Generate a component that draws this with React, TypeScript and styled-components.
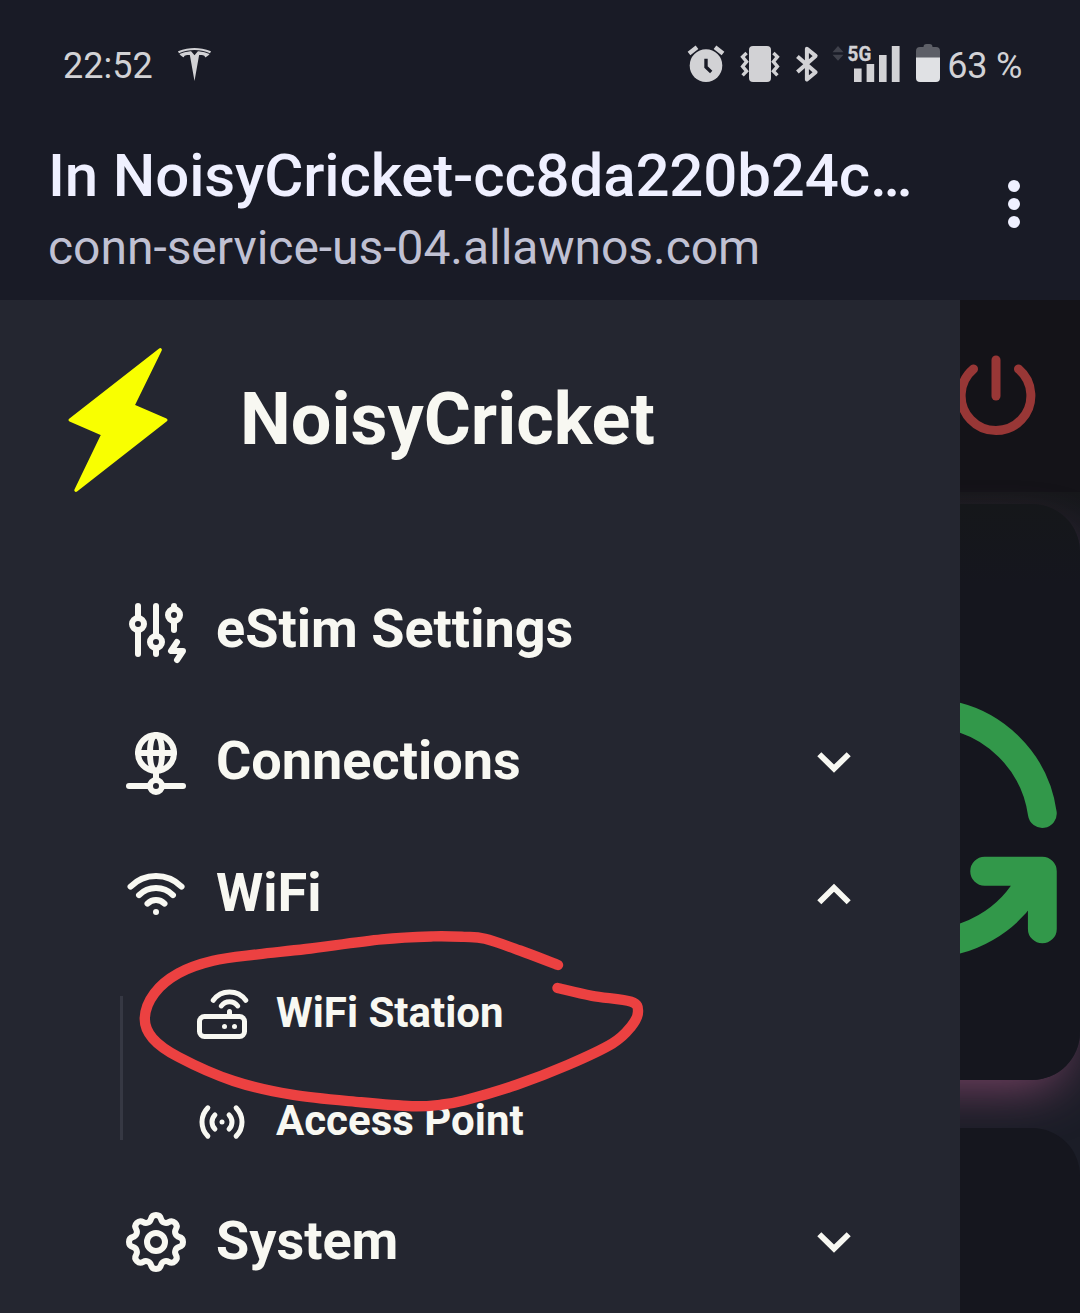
import React from "react";
import styled, { createGlobalStyle } from "styled-components";
import {
  TbAccessPoint,
  TbAdjustmentsBolt,
  TbNetwork,
  TbPower,
  TbRefresh,
  TbRouter,
  TbSettings,
  TbWifi,
} from "react-icons/tb";
import type { IconType } from "react-icons";

const GlobalStyle = createGlobalStyle`
  *, *::before, *::after { box-sizing: border-box; }
  body {
    margin: 0;
    background: #191b26;
    font-family: Roboto, "Liberation Sans", sans-serif;
  }
  svg { display: block; flex-shrink: 0; }
`;

const Screen = styled.div`
  position: relative;
  display: flex;
  flex-direction: column;
  width: 1080px;
  height: 1313px;
  overflow: hidden;
  background: #191b26;
`;

const StatusBar = styled.header`
  display: flex;
  justify-content: space-between;
  align-items: center;
  height: 120px;
  padding: 12px 58px 0 63px;
  color: #d2d2d5;
  font-size: 36px;
  line-height: 42px;
`;

const StatusGroup = styled.div<{ $gap: number; $tracking?: number }>`
  display: flex;
  align-items: center;
  gap: ${(p) => p.$gap}px;
  height: 42px;
  letter-spacing: ${(p) => p.$tracking ?? 0}px;

  svg { margin-bottom: 4px; letter-spacing: 0; }
`;

const TitleBar = styled.div`
  display: flex;
  justify-content: space-between;
  height: 180px;
  padding: 21px 60px 0 48px;
`;

const Titles = styled.div`
  display: flex;
  flex-direction: column;
  white-space: nowrap;
`;

const PageTitle = styled.h1`
  margin: 0;
  color: #eff0ff;
  font-size: 60px;
  font-weight: 500;
  line-height: 70px;
  letter-spacing: -0.15px;
`;

const PageHost = styled.div`
  margin-top: 9px;
  color: #c0c1d3;
  font-size: 48px;
  line-height: 56px;
  letter-spacing: -0.03px;
`;

const MenuDots = styled.button`
  display: flex;
  flex-direction: column;
  gap: 6px;
  margin: 39px 0 0;
  padding: 0;
  border: 0;
  background: none;
`;

const Dot = styled.span`
  width: 12px;
  height: 12px;
  border-radius: 50%;
  background: #eff0ff;
`;

const Body = styled.div`
  display: grid;
  grid-template-columns: 960px 120px;
  height: 1013px;
`;

const Drawer = styled.nav`
  background: #242630;
  color: #f8f8f2;
  overflow: hidden;
`;

const Brand = styled.div`
  display: flex;
  align-items: center;
  gap: 68px;
  height: 264px;
  padding: 0 0 24px 64px;
`;

const BrandName = styled.span`
  font-size: 72px;
  font-weight: 700;
  line-height: 84px;
`;

const Item = styled.div`
  display: flex;
  align-items: center;
  height: 132px;
  padding: 0 105px 0 120px;
  gap: 24px;
`;

const ItemLabel = styled.span`
  flex: 1;
  font-size: 54px;
  font-weight: 700;
  line-height: 64px;
  margin-top: -2px;
`;

const SubMenu = styled.div`
  display: flex;
  align-items: center;
  height: 216px;
  padding-left: 120px;
`;

const Rule = styled.div`
  width: 3px;
  height: 144px;
  background: #363843;
`;

const SubItems = styled.div`
  padding-left: 69px;
`;

const SubItem = styled.div`
  display: flex;
  align-items: center;
  gap: 24px;
  height: 108px;
`;

const SubLabel = styled.span`
  font-size: 42px;
  font-weight: 700;
  line-height: 50px;
  margin-top: -2px;
`;

const Behind = styled.main`
  display: flex;
  flex-direction: column;
  overflow: hidden;
  background: #1b1d25;
`;

const BehindHeader = styled.div`
  display: flex;
  justify-content: flex-end;
  height: 192px;
  padding: 42px 30px 0 0;
  background: #141318;
  color: #983736;
`;

const Cards = styled.div`
  display: flex;
  flex-direction: column;
  align-items: flex-end;
  gap: 48px;
  height: 821px;
  padding-top: 12px;
  background: linear-gradient(#17181b 0, #191b24 60px, #1b1d27 200px);
`;

const Card = styled.section<{ $height: number; $glow?: boolean }>`
  display: flex;
  justify-content: flex-end;
  flex-shrink: 0;
  width: 520px;
  height: ${(p) => p.$height}px;
  padding-top: 151px;
  border-radius: 48px;
  background: ${(p) => (p.$glow ? "linear-gradient(#15171a 0, #15161e 80px)" : "#15161e")};
  color: #32984a;
  box-shadow: ${(p) => (p.$glow ? "0 22px 52px -16px #7e4568" : "none")};

  svg { margin-right: -20px; }
`;

const Annotation = styled.svg`
  position: absolute;
  left: 0;
  top: 900px;
  pointer-events: none;
`;

type Point = [number, number];

const loop: Point[] = [
  [558, 965], [520, 950.5], [485, 938.8], [464, 936.9], [433, 936.4], [382, 939.3],
  [306, 949], [258, 954.3], [213, 960.8], [178.5, 973.3], [154.4, 993.3],
  [144.8, 1018], [152.7, 1038.3], [178.5, 1057], [233.6, 1081], [292, 1094.7],
  [361, 1102.3], [412, 1106.2], [440, 1104.8], [464, 1100.5], [516, 1085],
  [567.7, 1065], [612.4, 1043.5], [631, 1026.7], [638, 1011.7], [631, 1001.7],
  [592, 995.8], [557.5, 988],
];

function smoothPath(pts: Point[]): string {
  let d = `M${pts[0][0]} ${pts[0][1]}`;
  for (let i = 0; i < pts.length - 1; i++) {
    const a = pts[Math.max(0, i - 1)];
    const b = pts[i];
    const c = pts[i + 1];
    const e = pts[Math.min(pts.length - 1, i + 2)];
    d += `C${b[0] + (c[0] - a[0]) / 6} ${b[1] + (c[1] - a[1]) / 6} ${c[0] - (e[0] - b[0]) / 6} ${c[1] - (e[1] - b[1]) / 6} ${c[0]} ${c[1]}`;
  }
  return d;
}

const Emblem = () => (
  <svg width="33" height="33" viewBox="0 0 24 24" fill="currentColor">
    <path d="M12 5.362l2.475-3.026s4.245.09 8.471 2.054c-1.082 1.636-3.231 2.438-3.231 2.438-.146-1.439-1.154-1.79-4.354-1.79L12 24 8.619 5.034c-3.18 0-4.188.354-4.335 1.792 0 0-2.146-.795-3.229-2.43C5.28 2.431 9.525 2.34 9.525 2.34L12 5.362zm0-3.899c3.415-.03 7.326.528 11.328 2.28.535-.968.672-1.395.672-1.395C19.625.612 15.528.015 12 0 8.472.015 4.375.61 0 2.349c0 0 .195.525.672 1.396C4.674 1.989 8.585 1.435 12 1.46v.003z" />
  </svg>
);

const StatusIcons = () => (
  <svg width="260" height="62" viewBox="684 33 260 62" fill="#d2d2d5">
    <circle cx="706" cy="65.6" r="16.3" />
    <path d="M689 53.5l8-6.3M723 53.5l-8-6.3" stroke="#d2d2d5" strokeWidth="4.4" fill="none" />
    <path d="M706 58.7v8.4l5.2 4.8" stroke="#191b26" strokeWidth="3.4" fill="none" />
    <rect x="749" y="46" width="22" height="36" rx="4" />
    <path
      d="M746.6 53.5l-4 3.8 4 4.9-4 4.7 4 4.8-4 4.2M773.4 53.5l4 3.8-4 4.9 4 4.7-4 4.8 4 4.2"
      transform="translate(0 -.5)"
      stroke="#d2d2d5"
      strokeWidth="3.4"
      fill="none"
    />
    <path
      d="M797.4 56.4l18.2 15.9-8.7 7.2V48.7l8.7 7.2-18.2 16.2"
      stroke="#d2d2d5"
      strokeWidth="4"
      strokeLinejoin="round"
      fill="none"
    />
    <path d="M832.5 52.3l5.5-6.3 5.5 6.3zM832.5 54.7h11l-5.5 6z" fill="#3f414b" />
    <text
      x="847.6"
      y="60.8"
      fontSize="21"
      fontWeight="700"
      stroke="#d2d2d5"
      strokeWidth=".4"
      textLength="23.6"
      lengthAdjust="spacingAndGlyphs"
    >
      5G
    </text>
    <path d="M854 68.5h7.6V82H854zM866.6 64h7.6v18h-7.6zM879 55h7.6v27H879zM891.8 46h7.8v36h-7.8z" />
    <path d="M916 58V51q0-4 4-4h3.5q0-3 3-3h3q3 0 3 3h3.5q4 0 4 4v7z" fill="#5d5f67" />
    <path d="M916 57.5h24V78q0 4-4 4h-16q-4 0-4-4z" fill="#e0e1e4" />
  </svg>
);

const BoltLogo = () => (
  <svg width="108" height="150" viewBox="64 345 108 150">
    <path
      d="M160.2 349.8L132.8 405.7 165.8 420 76 490.2 103 434.2 70.2 420z"
      fill="#f9ff00"
      stroke="#f9ff00"
      strokeWidth="3.4"
      strokeLinejoin="round"
    />
  </svg>
);

const Chevron = ({ up }: { up?: boolean }) => (
  <svg width="42" height="42" viewBox="0 0 42 42" fill="none" stroke="currentColor" strokeWidth="5.8">
    <path d={up ? "M6.3 29.2L21 14.8 35.7 29.2" : "M6.3 13.2L21 27.6 35.7 13.2"} />
  </svg>
);

const items: { label: string; Icon: IconType; chevron?: "up" | "down" }[] = [
  { label: "eStim Settings", Icon: TbAdjustmentsBolt },
  { label: "Connections", Icon: TbNetwork, chevron: "down" },
  { label: "WiFi", Icon: TbWifi, chevron: "up" },
  { label: "System", Icon: TbSettings, chevron: "down" },
];

const wifiItems: { label: string; Icon: IconType }[] = [
  { label: "WiFi Station", Icon: TbRouter },
  { label: "Access Point", Icon: TbAccessPoint },
];

export default function App() {
  return (
    <Screen>
      <GlobalStyle />
      <StatusBar>
        <StatusGroup $gap={25}>
          <span>22:52</span>
          <Emblem />
        </StatusGroup>
        <StatusGroup $gap={3} $tracking={-0.25}>
          <StatusIcons />
          <span>63 %</span>
        </StatusGroup>
      </StatusBar>
      <TitleBar>
        <Titles>
          <PageTitle>In NoisyCricket-cc8da220b24c…</PageTitle>
          <PageHost>conn-service-us-04.allawnos.com</PageHost>
        </Titles>
        <MenuDots aria-label="Menu">
          <Dot />
          <Dot />
          <Dot />
        </MenuDots>
      </TitleBar>
      <Body>
        <Drawer>
          <Brand>
            <BoltLogo />
            <BrandName>NoisyCricket</BrandName>
          </Brand>
          {items.map(({ label, Icon, chevron }) => (
            <React.Fragment key={label}>
              <Item>
                <Icon size={72} />
                <ItemLabel>{label}</ItemLabel>
                {chevron && <Chevron up={chevron === "up"} />}
              </Item>
              {chevron === "up" && (
                <SubMenu>
                  <Rule />
                  <SubItems>
                    {wifiItems.map((sub) => (
                      <SubItem key={sub.label}>
                        <sub.Icon size={60} />
                        <SubLabel>{sub.label}</SubLabel>
                      </SubItem>
                    ))}
                  </SubItems>
                </SubMenu>
              )}
            </React.Fragment>
          ))}
        </Drawer>
        <Behind>
          <BehindHeader>
            <TbPower size={108} />
          </BehindHeader>
          <Cards>
            <Card $height={576} $glow>
              <TbRefresh size={346} />
            </Card>
            <Card $height={400} />
          </Cards>
        </Behind>
      </Body>
      <Annotation width="700" height="240" viewBox="0 900 700 240">
        <path
          d={smoothPath(loop)}
          fill="none"
          stroke="#ec4141"
          strokeWidth="10.4"
          strokeLinecap="round"
          strokeLinejoin="round"
        />
      </Annotation>
    </Screen>
  );
}
